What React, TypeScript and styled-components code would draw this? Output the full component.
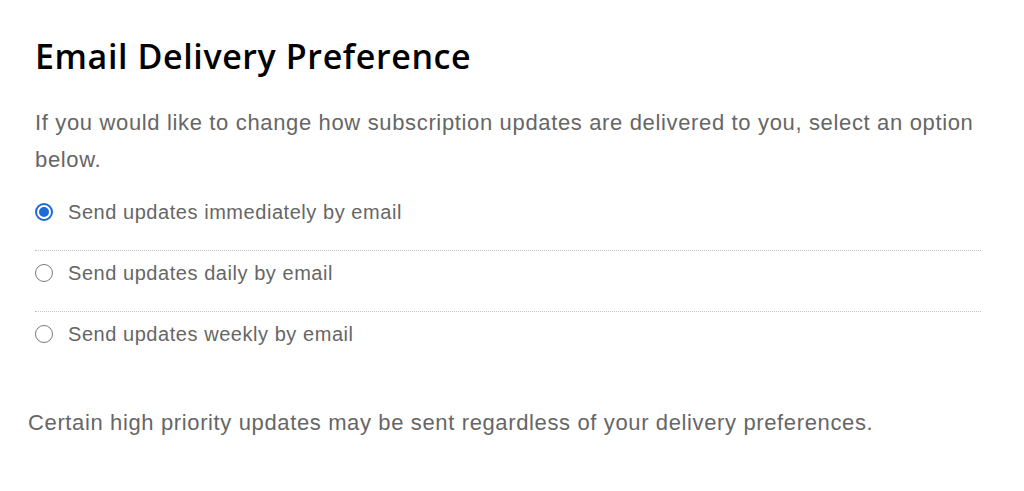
import React, { useState } from "react";
import styled, { createGlobalStyle } from "styled-components";

const GlobalStyle = createGlobalStyle`
  html, body {
    margin: 0;
    padding: 0;
    background: #fff;
  }
  body {
    font-family: "Liberation Sans", Arial, sans-serif;
  }
`;

const Page = styled.div`
  width: 1024px;
  height: 491px;
  padding: 34px 0 0 28px;
  box-sizing: border-box;
  overflow: hidden;
`;

const Section = styled.section`
  width: 946px;
  margin-left: 7px;
`;

const Title = styled.h2`
  margin: 0;
  font-family: "Open Sans", sans-serif;
  font-weight: 600;
  font-size: 34px;
  line-height: 44px;
  color: #000;
  letter-spacing: 0.6px;
`;

const Intro = styled.p`
  margin: 26px 0 0;
  font-size: 22px;
  letter-spacing: 0.65px;
  line-height: 37px;
  color: #666;
`;

const OptionList = styled.div`
  display: flex;
  flex-direction: column;
  margin-top: 11px;
`;

const Option = styled.label<{ $first?: boolean }>`
  display: flex;
  align-items: flex-start;
  gap: 15px;
  height: 61px;
  box-sizing: border-box;
  padding-top: 10px;
  border-top: 1px dotted ${(p) => (p.$first ? "transparent" : "#c4c4c4")};
  font-size: 20px;
  letter-spacing: 0.55px;
  line-height: 24px;
  color: #666;
  cursor: pointer;
`;

const Radio = styled.span<{ $checked: boolean }>`
  width: 18px;
  height: 18px;
  margin-top: 3px;
  border-radius: 50%;
  box-sizing: border-box;
  flex: none;
  border: ${(p) => (p.$checked ? "2px solid #1b6bd6" : "1px solid #7a7a7a")};
  display: flex;
  align-items: center;
  justify-content: center;
  &::after {
    content: "";
    display: ${(p) => (p.$checked ? "block" : "none")};
    width: 10px;
    height: 10px;
    border-radius: 50%;
    background: #1b6bd6;
  }
`;

const HiddenInput = styled.input`
  display: none;
`;

const Note = styled.p`
  margin: 39px 0 0;
  font-size: 22px;
  letter-spacing: 0.63px;
  line-height: 24px;
  color: #666;
`;

const options = [
  { id: "immediate", label: "Send updates immediately by email" },
  { id: "daily", label: "Send updates daily by email" },
  { id: "weekly", label: "Send updates weekly by email" },
];

export default function App() {
  const [choice, setChoice] = useState("immediate");

  return (
    <>
      <GlobalStyle />
      <Page>
        <Section>
          <Title>Email Delivery Preference</Title>
          <Intro>
            If you would like to change how subscription updates are delivered to you, select an option below.
          </Intro>
          <OptionList>
            {options.map((o, i) => (
              <Option key={o.id} $first={i === 0}>
                <HiddenInput
                  type="radio"
                  name="delivery"
                  checked={choice === o.id}
                  onChange={() => setChoice(o.id)}
                />
                <Radio $checked={choice === o.id} />
                {o.label}
              </Option>
            ))}
          </OptionList>
        </Section>
        <Note>Certain high priority updates may be sent regardless of your delivery preferences.</Note>
      </Page>
    </>
  );
}
